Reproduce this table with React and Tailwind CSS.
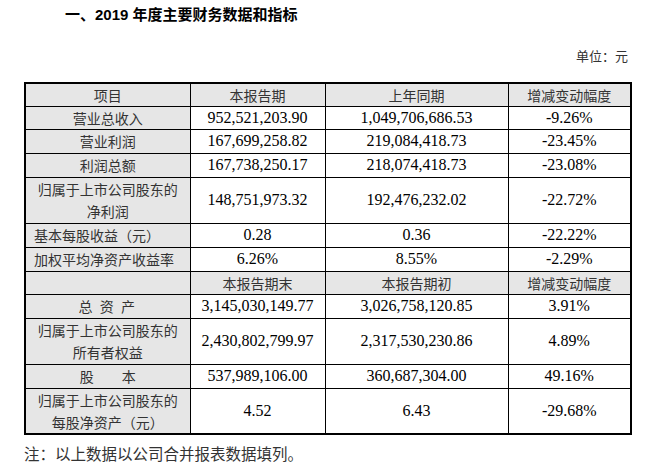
import React from "react";

const serif = "font-['Liberation_Serif','Noto_Sans_CJK_SC',serif]";

const topRows = [
  { label: ["营业总收入"], a: "952,521,203.90", b: "1,049,706,686.53", c: "-9.26%", h: "h-[22px]" },
  { label: ["营业利润"], a: "167,699,258.82", b: "219,084,418.73", c: "-23.45%", h: "h-[24px]" },
  { label: ["利润总额"], a: "167,738,250.17", b: "218,074,418.73", c: "-23.08%", h: "h-[24px]" },
  { label: ["归属于上市公司股东的", "净利润"], a: "148,751,973.32", b: "192,476,232.02", c: "-22.72%", h: "h-[46px]" },
  { label: ["基本每股收益（元）"], a: "0.28", b: "0.36", c: "-22.22%", h: "h-[24px]", left: true },
  { label: ["加权平均净资产收益率"], a: "6.26%", b: "8.55%", c: "-2.29%", h: "h-[24px]", left: true },
];

const bottomRows = [
  { label: ["总 资 产"], a: "3,145,030,149.77", b: "3,026,758,120.85", c: "3.91%", h: "h-[24px]", wide: true },
  { label: ["归属于上市公司股东的", "所有者权益"], a: "2,430,802,799.97", b: "2,317,530,230.86", c: "4.89%", h: "h-[46px]" },
  { label: ["股\u3000\u3000本"], a: "537,989,106.00", b: "360,687,304.00", c: "49.16%", h: "h-[24px]" },
  { label: ["归属于上市公司股东的", "每股净资产（元）"], a: "4.52", b: "6.43", c: "-29.68%", h: "h-[46px]" },
];

const cell = "border border-black p-0 align-middle";
const cjk = "font-['Noto_Sans_CJK_SC',sans-serif] text-[14px] text-[#333]";

const HeadRow = ({ cols, first }) => (
  <tr className="h-[23px] bg-[#e6e6e6]">
    <td className={`${cell} ${cjk} text-center leading-[20px]`}>{first}</td>
    {cols.map((c) => (
      <td key={c} className={`${cell} ${cjk} text-center leading-[20px]`}>
        {c}
      </td>
    ))}
  </tr>
);

const DataRow = ({ row }) => (
  <tr className={row.h}>
    <td
      className={`${cell} ${cjk} bg-[#e6e6e6] leading-[22px] ${
        row.left ? "text-left pl-[8px]" : "text-center"
      } ${row.wide ? "tracking-[2px]" : ""}`}
    >
      {row.label.map((l) => (
        <div key={l}>{l}</div>
      ))}
    </td>
    <td className={`${cell} ${serif} text-center text-[16px] leading-[20px] text-black`}>{row.a}</td>
    <td className={`${cell} ${serif} text-center text-[16px] leading-[20px] text-black`}>{row.b}</td>
    <td className={`${cell} ${serif} text-center text-[16px] leading-[20px] text-black`}>{row.c}</td>
  </tr>
);

export default function App() {
  return (
    <div className="w-[656px] h-[471px] bg-white overflow-hidden">
      <div className="h-[30px] flex items-center pl-[65px] text-[15px] font-bold text-black font-['Liberation_Sans','Noto_Sans_CJK_SC',sans-serif]">
        一、2019 年度主要财务数据和指标
      </div>
      <div className="h-[52px] flex items-center justify-end pr-[28px] text-[13px] text-[#333] font-['Noto_Sans_CJK_SC',sans-serif]">
        单位：元
      </div>
      <table className="ml-[24px] w-[606px] border-collapse border-2 border-black table-fixed">
        <colgroup>
          <col className="w-[165px]" />
          <col className="w-[135px]" />
          <col className="w-[183px]" />
          <col className="w-[123px]" />
        </colgroup>
        <tbody>
          <HeadRow first="项目" cols={["本报告期", "上年同期", "增减变动幅度"]} />
          {topRows.map((r) => (
            <DataRow key={r.a + r.c} row={r} />
          ))}
          <HeadRow first="" cols={["本报告期末", "本报告期初", "增减变动幅度"]} />
          {bottomRows.map((r) => (
            <DataRow key={r.a + r.c} row={r} />
          ))}
        </tbody>
      </table>
      <div className="h-[38px] flex items-center pl-[24px] text-[15.5px] text-[#333] font-['Noto_Sans_CJK_SC',sans-serif]">
        注：以上数据以公司合并报表数据填列。
      </div>
    </div>
  );
}
